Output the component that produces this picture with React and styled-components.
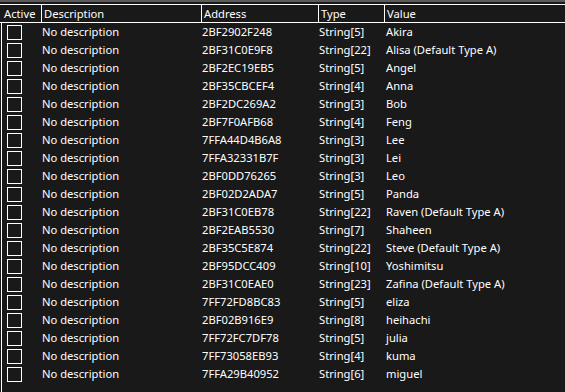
import React from 'react';
import styled, { createGlobalStyle } from 'styled-components';

const GlobalStyle = createGlobalStyle`
  html, body {
    margin: 0;
    padding: 0;
    background: #191919;
  }
  body {
    font-family: "Noto Sans", "Open Sans", sans-serif;
    font-size: 11.2px;
    color: #ffffff;
    overflow: hidden;
  }
`;

const COLS = [41, 160, 117, 66];

const Frame = styled.div`
  width: 565px;
  height: 392px;
  background: #191919;
  display: flex;
  flex-direction: column;
`;

const TopStrip = styled.div`
  height: 2px;
  background: #5c5c5c;
  margin-bottom: 2px;
`;

const Header = styled.div`
  display: flex;
  height: 17px;
  border-top: 1px solid #ffffff;
  border-bottom: 1px solid #ffffff;
`;

const HeadCell = styled.div`
  width: ${({ w }) => (w ? `${w}px` : 'auto')};
  flex: ${({ w }) => (w ? 'none' : '1')};
  box-sizing: border-box;
  padding-left: ${({ pad }) => pad || 2}px;
  border-right: ${({ last }) => (last ? 'none' : '1px solid #ffffff')};
  line-height: 17px;
  white-space: nowrap;
  overflow: hidden;
`;

const Body = styled.div`
  flex: 1;
  margin-left: 1px;
  border-left: 1px solid #ffffff;
`;

const Row = styled.div`
  display: flex;
  height: 18px;
  align-items: center;
`;

const Cell = styled.div`
  width: ${({ w }) => (w ? `${w}px` : 'auto')};
  flex: ${({ w }) => (w ? 'none' : '1')};
  box-sizing: border-box;
  padding-left: ${({ pad }) => pad || 0}px;
  white-space: nowrap;
  line-height: 18px;
`;

const Check = styled.span`
  display: block;
  width: 15px;
  height: 15px;
  box-sizing: border-box;
  border: 1px solid #ffffff;
  margin-left: 5px;
`;

const rows = [
  ['2BF2902F248', 'String[5]', 'Akira'],
  ['2BF31C0E9F8', 'String[22]', 'Alisa (Default Type A)'],
  ['2BF2EC19EB5', 'String[5]', 'Angel'],
  ['2BF35CBCEF4', 'String[4]', 'Anna'],
  ['2BF2DC269A2', 'String[3]', 'Bob'],
  ['2BF7F0AFB68', 'String[4]', 'Feng'],
  ['7FFA44D4B6A8', 'String[3]', 'Lee'],
  ['7FFA32331B7F', 'String[3]', 'Lei'],
  ['2BF0DD76265', 'String[3]', 'Leo'],
  ['2BF02D2ADA7', 'String[5]', 'Panda'],
  ['2BF31C0EB78', 'String[22]', 'Raven (Default Type A)'],
  ['2BF2EAB5530', 'String[7]', 'Shaheen'],
  ['2BF35C5E874', 'String[22]', 'Steve (Default Type A)'],
  ['2BF95DCC409', 'String[10]', 'Yoshimitsu'],
  ['2BF31C0EAE0', 'String[23]', 'Zafina (Default Type A)'],
  ['7FF72FD8BC83', 'String[5]', 'eliza'],
  ['2BF02B916E9', 'String[8]', 'heihachi'],
  ['7FF72FC7DF78', 'String[5]', 'julia'],
  ['7FF73058EB93', 'String[4]', 'kuma'],
  ['7FFA29B40952', 'String[6]', 'miguel'],
];

export default function App() {
  return (
    <Frame>
      <GlobalStyle />
      <TopStrip />
      <Header>
        <HeadCell w={COLS[0] + 1} pad={4}>Active</HeadCell>
        <HeadCell w={COLS[1]}>Description</HeadCell>
        <HeadCell w={COLS[2]}>Address</HeadCell>
        <HeadCell w={COLS[3]}>Type</HeadCell>
        <HeadCell last>Value</HeadCell>
      </Header>
      <Body>
        {rows.map(([addr, type, value], i) => (
          <Row key={i}>
            <Cell w={COLS[0] - 1}>
              <Check />
            </Cell>
            <Cell w={COLS[1]}>No description</Cell>
            <Cell w={COLS[2]}>{addr}</Cell>
            <Cell w={COLS[3]}>{type}</Cell>
            <Cell pad={1}>{value}</Cell>
          </Row>
        ))}
      </Body>
    </Frame>
  );
}
